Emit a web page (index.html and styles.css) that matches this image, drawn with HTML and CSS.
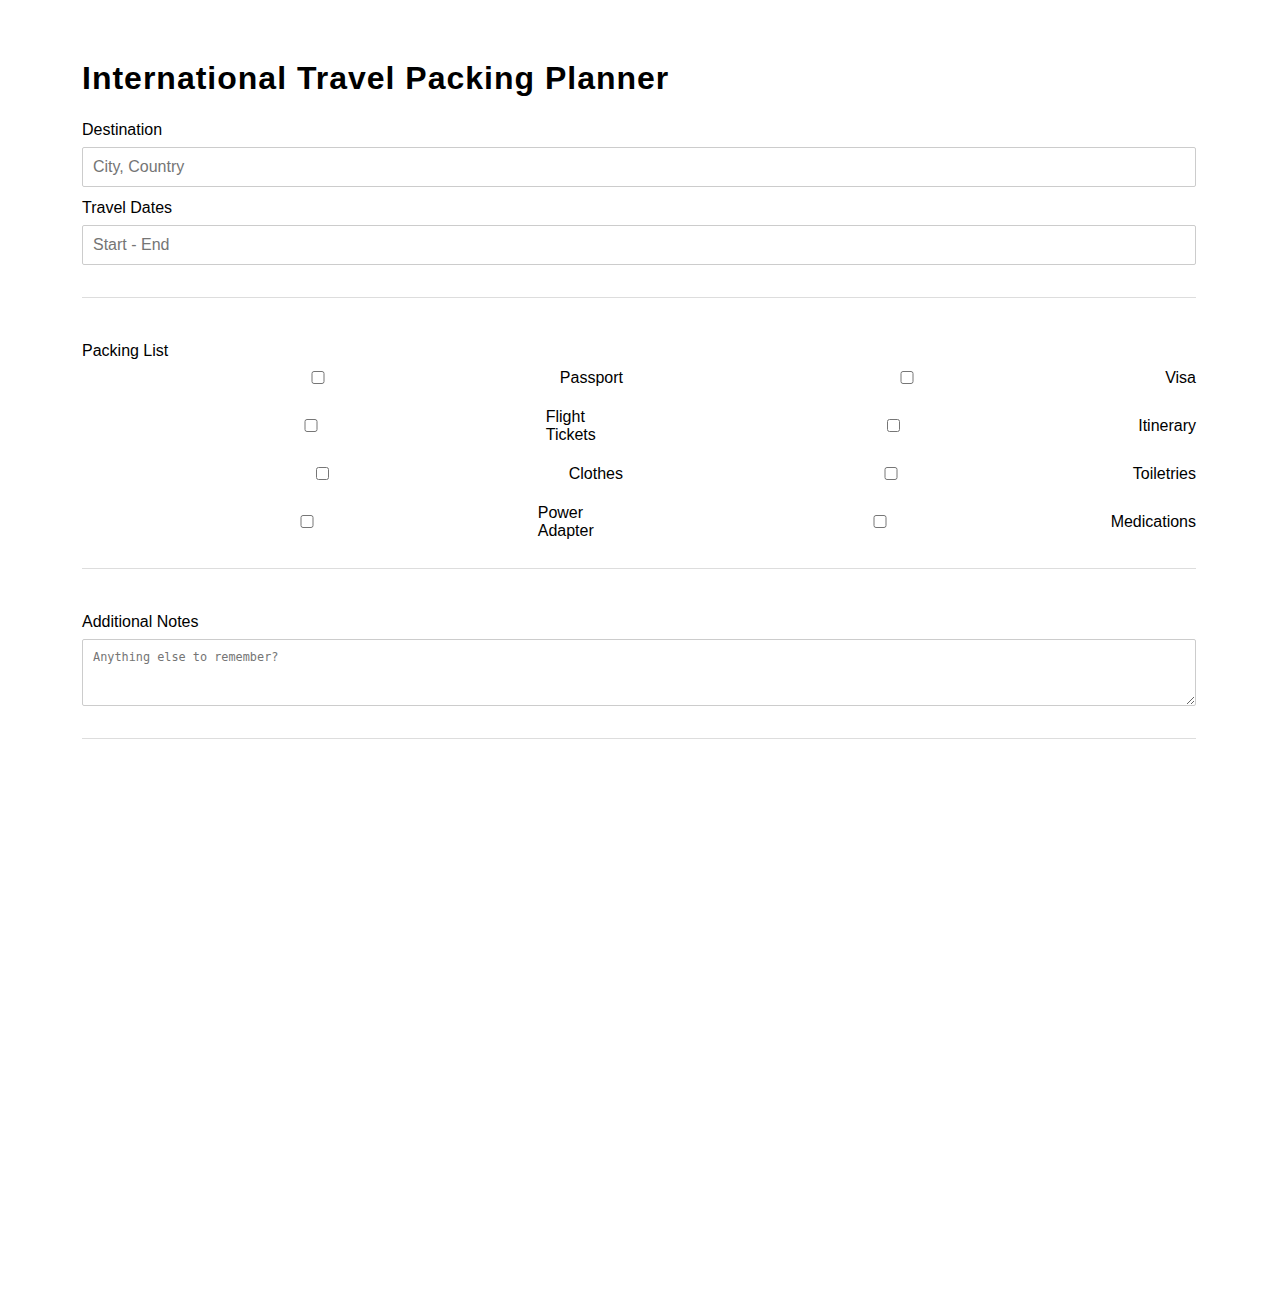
FILE: index.html
```
<!DOCTYPE html>
<html lang="en">
<head>
	<meta charset="UTF-8">
	<title>International Travel Packing Planner</title>
	<link rel="stylesheet" href="styles.css">
</head>
<body>
	<div class="planner">
		<h1>International Travel Packing Planner</h1>

		<div class="fields">
			<label class="lbl" for="dest">Destination</label>
			<input class="txt" type="text" id="dest" placeholder="City, Country">

			<label class="lbl" for="dates">Travel Dates</label>
			<input class="txt" type="text" id="dates" placeholder="Start - End">
		</div>

		<hr>

		<div class="sec">
			<label class="lbl">Packing List</label>
			<div class="list">
				<label class="item"><input type="checkbox">Passport</label>
				<label class="item"><input type="checkbox">Visa</label>
				<label class="item"><input type="checkbox">Flight Tickets</label>
				<label class="item"><input type="checkbox">Itinerary</label>
				<label class="item"><input type="checkbox">Clothes</label>
				<label class="item"><input type="checkbox">Toiletries</label>
				<label class="item"><input type="checkbox">Power Adapter</label>
				<label class="item"><input type="checkbox">Medications</label>
			</div>
		</div>

		<hr>

		<div class="sec notes">
			<label class="lbl" for="notes">Additional Notes</label>
			<textarea id="notes" rows="3" placeholder="Anything else to remember?"></textarea>
		</div>

		<hr>
	</div>
</body>
</html>
```

FILE: styles.css
```
*{
	box-sizing: border-box;
}
body{
	margin: 0;
	font-family: "Liberation Sans", Arial, sans-serif;
	font-size: 16px;
	color: #000;
	background: #fff;
}
.planner{
	max-width: 1114px;
	margin: 0 auto;
	padding-top: 60px;
}
h1{
	font-size: 32px;
	letter-spacing: 1px;
	margin: 0 0 24px;
}
.lbl{
	display: block;
	line-height: 18px;
	margin-bottom: 8px;
}
.fields{
	padding-bottom: 20px;
}
.txt{
	display: block;
	width: 100%;
	height: 40px;
	padding: 0 10px;
	margin-bottom: 12px;
	border: 1px solid #ccc;
	border-radius: 2px;
	font-family: "Liberation Sans", Arial, sans-serif;
	font-size: 16px;
}
.txt::placeholder{
	color: #757575;
}
hr{
	border: none;
	border-top: 1px solid #ddd;
	margin: 0;
}
.sec{
	padding: 44px 0 28px;
}
.notes{
	padding: 44px 0 32px;
}
.list{
	display: grid;
	grid-template-columns: 1fr 1fr;
	column-gap: 32px;
	row-gap: 20.5px;
}
.item{
	display: flex;
	align-items: center;
	gap: 8px;
}
.item input{
	width: 100%;
	margin: 3px 3px 3px 5px;
}
textarea{
	display: block;
	width: 100%;
	padding: 10px;
	border: 1px solid #ccc;
	border-radius: 2px;
	font-family: "DejaVu Sans Mono", monospace;
	font-size: 11.85px;
	line-height: 15px;
}
textarea::placeholder{
	color: #757575;
}
```
